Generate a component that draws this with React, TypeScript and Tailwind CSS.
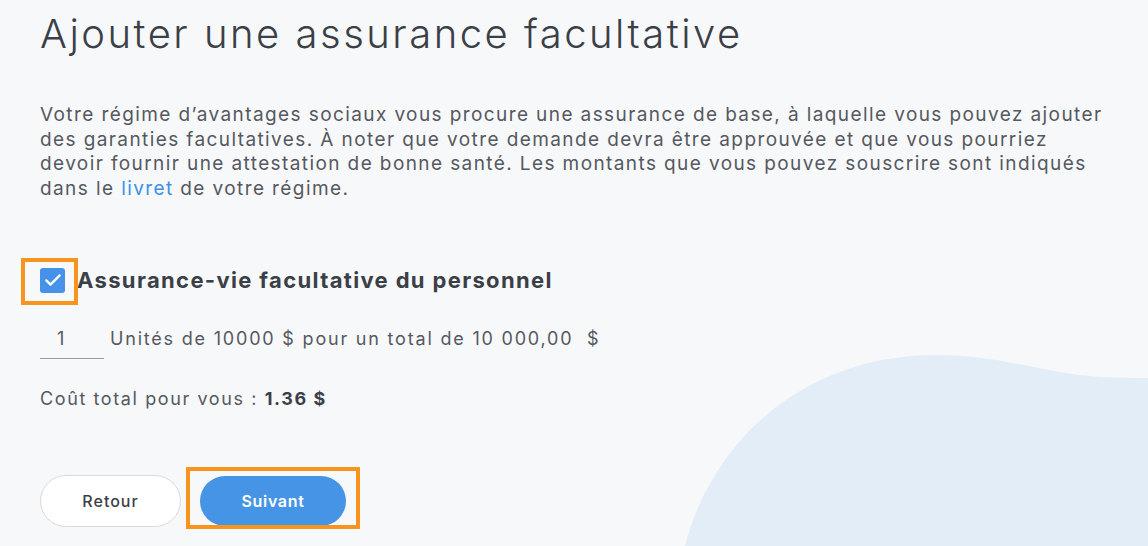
import React from "react";

export default function App() {
  return (
    <div className="relative w-[1148px] h-[546px] overflow-hidden bg-[#f7f8fa] font-['Inter','Liberation_Sans',sans-serif]">
      <svg className="absolute left-0 top-0" width="1148" height="546" viewBox="0 0 1148 546">
        <path
          d="M685,546 C715,430 815,355 935,355 C1000,355 1040,372 1090,376 C1115,378 1135,378 1148,378 L1148,546 Z"
          fill="#e3edf8"
        />
      </svg>
      <div className="relative flex flex-col pl-[40px] pt-[6px]">
        <h1 className="text-[40px] leading-[56px] font-light text-[#3b3f46] tracking-[2.5px] whitespace-nowrap">
          Ajouter une assurance facultative
        </h1>
        <p className="mt-[41px] text-[19px] leading-[24.5px] text-[#55595f] tracking-[1.4px] whitespace-nowrap">
          Votre régime d’avantages sociaux vous procure une assurance de base, à laquelle vous pouvez ajouter
          <br />
          des garanties facultatives. À noter que votre demande devra être approuvée et que vous pourriez
          <br />
          devoir fournir une attestation de bonne santé. Les montants que vous pouvez souscrire sont indiqués
          <br />
          dans le <span className="text-[#3f8fe6]">livret</span> de votre régime.
        </p>
        <div className="mt-[65px] flex items-center h-[28px]">
          <div className="relative w-[25px] h-[25px] rounded-[3px] bg-[#4592e8] flex items-center justify-center">
            <svg width="20" height="20" viewBox="0 0 24 24" fill="none" stroke="white" strokeWidth="2.8" strokeLinecap="round" strokeLinejoin="round">
              <path d="M4 12.5l5 5L20 6.5" />
            </svg>
            <div className="absolute left-[-19px] top-[-10px] w-[57px] h-[47px] border-[4px] border-[#f7941d]" />
          </div>
          <span className="ml-[12px] text-[22px] font-bold text-[#3b3f46] tracking-[1.35px] whitespace-nowrap">
            Assurance-vie facultative du personnel
          </span>
        </div>
        <div className="mt-[24px] flex items-start h-[41px]">
          <div className="w-[64px] h-[41px] border-b border-[#9a9a9a] text-[18px] text-[#55595f] pl-[17px] pt-[7px]">1</div>
          <span className="ml-[6px] pt-[7px] text-[18px] text-[#55595f] tracking-[1.8px] whitespace-nowrap">
            Unités de 10000 $ pour un total de 10 000,00&nbsp; $
          </span>
        </div>
        <div className="mt-[26px] text-[18px] text-[#55595f] tracking-[1.6px] whitespace-nowrap">
          Coût total pour vous : <span className="font-bold text-[#3b3f46]">1.36 $</span>
        </div>
        <div className="mt-[63px] flex items-center gap-[19px]">
          <button className="w-[141px] h-[52px] rounded-full bg-white border border-[#d9dadc] text-[16px] font-medium text-[#3b3f46] tracking-[1px]">
            Retour
          </button>
          <div className="relative">
            <button className="w-[146px] h-[50px] rounded-full bg-[#4594e6] text-[16px] font-semibold text-white tracking-[0.7px]">
              Suivant
            </button>
            <div className="absolute left-[-14px] top-[-9px] w-[174px] h-[62px] border-[4px] border-[#f7941d]" />
          </div>
        </div>
      </div>
    </div>
  );
}
